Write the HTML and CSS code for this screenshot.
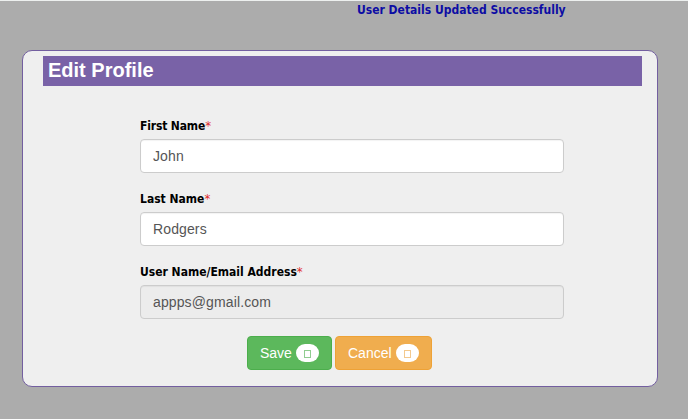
FILE: index.html
```html
<!DOCTYPE html>
<html lang="en">
<head>
<meta charset="utf-8">
<title>Edit Profile</title>
<link rel="stylesheet" href="styles.css">
</head>
<body>
<p class="message"><span>User Details Updated Successfully</span></p>
<main class="panel">
  <h1 class="panel-title">Edit Profile</h1>
  <form class="form">
    <div class="group">
      <label for="first"><span class="label-first">First Name</span><i>*</i></label>
      <input id="first" type="text" value="John">
    </div>
    <div class="group">
      <label for="last"><span class="label-last">Last Name</span><i>*</i></label>
      <input id="last" type="text" value="Rodgers">
    </div>
    <div class="group">
      <label for="email"><span class="label-email">User Name/Email Address</span><i>*</i></label>
      <input id="email" type="text" value="appps@gmail.com" readonly>
    </div>
    <div class="actions">
      <button type="button" class="btn save">Save <span class="badge"><span class="glyph"></span></span></button>
      <button type="button" class="btn cancel">Cancel <span class="badge"><span class="glyph"></span></span></button>
    </div>
  </form>
</main>
</body>
</html>
```
FILE: styles.css
```css
* { box-sizing: border-box; }
body {
  margin: 0;
  height: 419px;
  overflow: hidden;
  background: #acacac;
  border-top: 1px solid #edf0ef;
  font-family: "Liberation Sans", Arial, sans-serif;
}
.message {
  margin: 0 0 0 357px;
  height: 49px;
  font: bold 12px/18px "DejaVu Sans Condensed", "DejaVu Sans", sans-serif;
  font-stretch: condensed;
  color: #0c0ca4;
  white-space: nowrap;
}
.panel {
  width: 636px;
  height: 337px;
  margin-left: 22px;
  padding: 5px 15px 0 20px;
  background: #efefef;
  border: 1px solid #735fa0;
  border-radius: 10px;
}
.panel-title {
  margin: 0;
  height: 30px;
  padding-left: 5px;
  background: #7962a7;
  color: #fff;
  font-size: 20px;
  line-height: 28px;
}
.form {
  width: 424px;
  margin: 30px 0 0 97px;
}
.group { height: 73px; }
label {
  display: block;
  height: 23px;
  font: bold 12px/21px "DejaVu Sans Condensed", "DejaVu Sans", sans-serif;
  font-stretch: condensed;
  color: #000;
  white-space: nowrap;
}
.label-first { letter-spacing: -0.15px; }
label i {
  color: #e02b2b;
  font-family: "DejaVu Sans", sans-serif;
  font-size: 13px;
  font-style: normal;
  font-weight: normal;
  line-height: 1;
}
input {
  display: block;
  width: 100%;
  height: 34px;
  padding: 6px 12px;
  border: 1px solid #ccc;
  border-radius: 4px;
  background: #fff;
  box-shadow: inset 0 1px 1px rgba(0, 0, 0, .05);
  color: #555;
  font: 14px/20px "Liberation Sans", Arial, sans-serif;
  letter-spacing: 0.12px;
}
input[readonly] { background: #ececec; }
.actions {
  display: flex;
  gap: 3px;
  margin: 1px 0 0 107px;
}
.btn {
  display: flex;
  align-items: center;
  gap: 4px;
  height: 34px;
  padding: 0 12px;
  border: 1px solid;
  border-radius: 4px;
  color: #fff;
  font: 14px/20px "Liberation Sans", Arial, sans-serif;
}
.save { width: 85px; background: #5cb85c; border-color: #4cae4c; }
.cancel { width: 97px; background: #f0ad4e; border-color: #eea236; }
.badge {
  display: flex;
  align-items: center;
  justify-content: center;
  flex: none;
  width: 23px;
  height: 18px;
  border-radius: 10px;
  background: #fff;
}
.glyph {
  width: 7px;
  height: 8px;
  margin-top: 2px;
  border: 1px solid #90cd90;
}
.cancel .glyph { border-color: #f3c98e; }
```
